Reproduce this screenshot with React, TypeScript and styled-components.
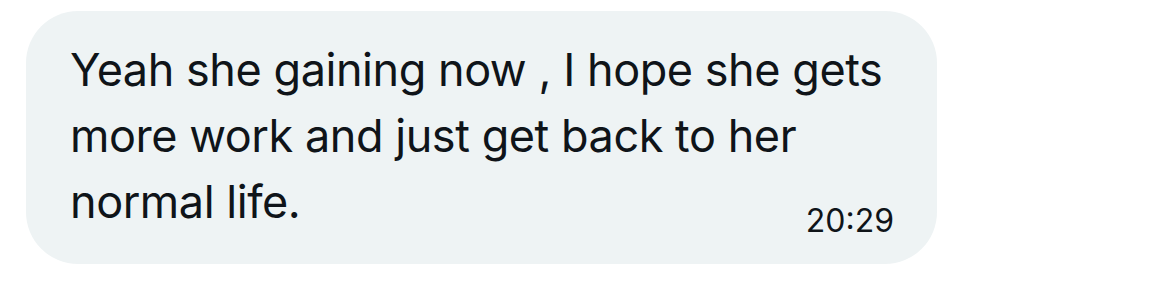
import styled, { createGlobalStyle } from "styled-components";

const GlobalStyle = createGlobalStyle`
  html, body {
    margin: 0;
    padding: 0;
    background: #ffffff;
  }
  body {
    font-family: Inter, "Noto Sans", "Liberation Sans", sans-serif;
    -webkit-font-smoothing: antialiased;
  }
`;

const Thread = styled.div`
  display: flex;
  flex-direction: column;
  align-items: flex-start;
  padding: 11px 0 0 26px;
`;

const Bubble = styled.div`
  display: flex;
  flex-direction: column;
  box-sizing: border-box;
  width: 911px;
  padding: 26px 43px 27px 44px;
  background-color: #eef3f4;
  border-radius: 52px;
`;

const MessageText = styled.p`
  margin: 0;
  font-size: 45px;
  line-height: 66px;
  color: #0f1419;
  letter-spacing: -0.45px;
`;

const Time = styled.span`
  align-self: flex-end;
  margin-top: -30px;
  font-size: 32px;
  line-height: 32px;
  color: #0f1419;
`;

const App = () => {
  return (
    <>
      <GlobalStyle />
      <Thread>
        <Bubble>
          <MessageText>
            Yeah she gaining now , I hope she gets more work and just get back
            to her normal life.
          </MessageText>
          <Time>20:29</Time>
        </Bubble>
      </Thread>
    </>
  );
};

export default App;
